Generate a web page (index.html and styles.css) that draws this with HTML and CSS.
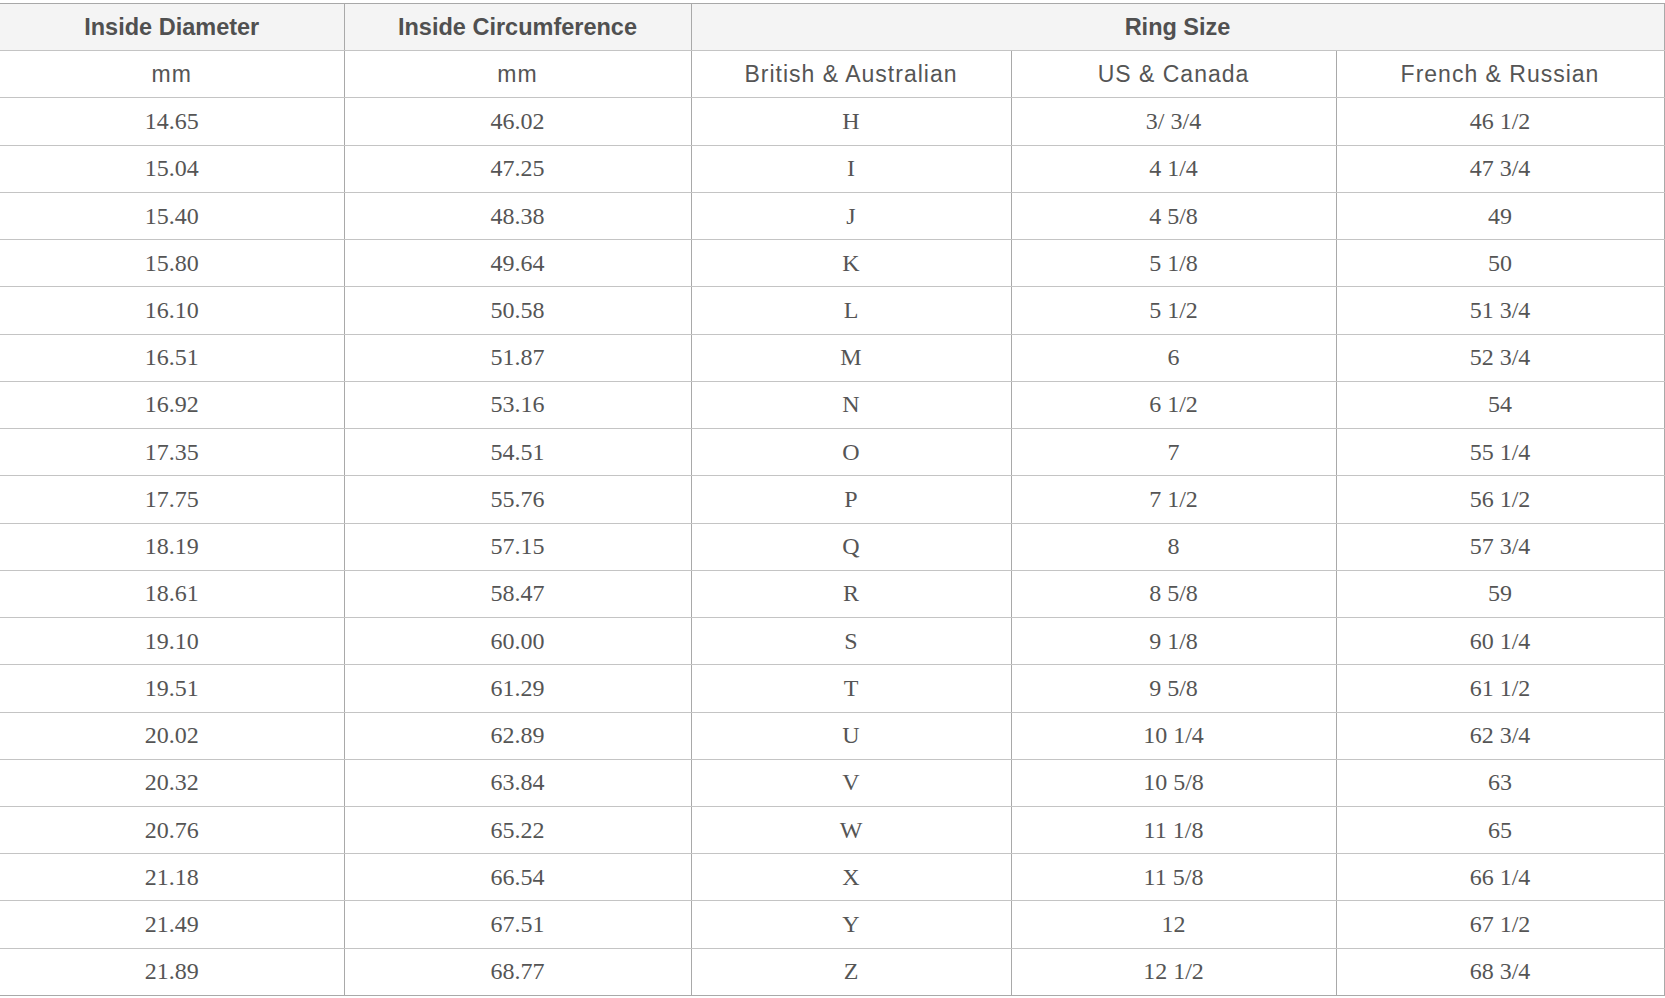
FILE: index.html
```html
<!DOCTYPE html>
<html lang="en">
<head>
<meta charset="utf-8">
<title>Ring Size Chart</title>
<link rel="stylesheet" href="styles.css">
</head>
<body>
<table class="chart">
  <colgroup>
    <col class="c1"><col class="c2"><col class="c3"><col class="c4"><col class="c5">
  </colgroup>
  <thead>
    <tr class="head">
      <th>Inside Diameter</th>
      <th>Inside Circumference</th>
      <th colspan="3">Ring Size</th>
    </tr>
    <tr class="sub">
      <td>mm</td>
      <td>mm</td>
      <td>British &amp; Australian</td>
      <td>US &amp; Canada</td>
      <td>French &amp; Russian</td>
    </tr>
  </thead>
  <tbody>
    <tr><td>14.65</td><td>46.02</td><td>H</td><td>3/ 3/4</td><td>46 1/2</td></tr>
    <tr><td>15.04</td><td>47.25</td><td>I</td><td>4 1/4</td><td>47 3/4</td></tr>
    <tr><td>15.40</td><td>48.38</td><td>J</td><td>4 5/8</td><td>49</td></tr>
    <tr><td>15.80</td><td>49.64</td><td>K</td><td>5 1/8</td><td>50</td></tr>
    <tr><td>16.10</td><td>50.58</td><td>L</td><td>5 1/2</td><td>51 3/4</td></tr>
    <tr><td>16.51</td><td>51.87</td><td>M</td><td>6</td><td>52 3/4</td></tr>
    <tr><td>16.92</td><td>53.16</td><td>N</td><td>6 1/2</td><td>54</td></tr>
    <tr><td>17.35</td><td>54.51</td><td>O</td><td>7</td><td>55 1/4</td></tr>
    <tr><td>17.75</td><td>55.76</td><td>P</td><td>7 1/2</td><td>56 1/2</td></tr>
    <tr><td>18.19</td><td>57.15</td><td>Q</td><td>8</td><td>57 3/4</td></tr>
    <tr><td>18.61</td><td>58.47</td><td>R</td><td>8 5/8</td><td>59</td></tr>
    <tr><td>19.10</td><td>60.00</td><td>S</td><td>9 1/8</td><td>60 1/4</td></tr>
    <tr><td>19.51</td><td>61.29</td><td>T</td><td>9 5/8</td><td>61 1/2</td></tr>
    <tr><td>20.02</td><td>62.89</td><td>U</td><td>10 1/4</td><td>62 3/4</td></tr>
    <tr><td>20.32</td><td>63.84</td><td>V</td><td>10 5/8</td><td>63</td></tr>
    <tr><td>20.76</td><td>65.22</td><td>W</td><td>11 1/8</td><td>65</td></tr>
    <tr><td>21.18</td><td>66.54</td><td>X</td><td>11 5/8</td><td>66 1/4</td></tr>
    <tr><td>21.49</td><td>67.51</td><td>Y</td><td>12</td><td>67 1/2</td></tr>
    <tr><td>21.89</td><td>68.77</td><td>Z</td><td>12 1/2</td><td>68 3/4</td></tr>
  </tbody>
</table>
</body>
</html>
```

FILE: styles.css
```css
html, body {
  margin: 0;
  padding: 0;
  background: #ffffff;
}

body {
  padding-top: 3px;
}

.chart {
  border-collapse: collapse;
  table-layout: fixed;
  width: 1664px;
  color: #555555;
}

.c1 { width: 344px; }
.c2 { width: 347px; }
.c3 { width: 320px; }
.c4 { width: 325px; }
.c5 { width: 328px; }

.chart tr {
  height: 47.24px;
}

.chart th,
.chart td {
  padding: 0;
  text-align: center;
  vertical-align: middle;
  border-top: 1px solid #c4c4c4;
  border-bottom: 1px solid #c4c4c4;
  border-left: 1px solid #a9a9a9;
  border-right: 1px solid #a9a9a9;
}

.chart tr > :first-child {
  border-left: none;
}

.head th {
  background: #f4f4f4;
  border-top: 1px solid #a8a8a8;
  font-family: "Liberation Sans", Arial, sans-serif;
  font-weight: bold;
  font-size: 23.5px;
  color: #505050;
}

.sub td {
  font-family: "Liberation Sans", Arial, sans-serif;
  font-size: 23px;
  letter-spacing: 1px;
  color: #555555;
}

tbody td {
  font-family: "Liberation Serif", "Times New Roman", serif;
  font-size: 24px;
  color: #555555;
  padding-top: 3px;
}

tbody tr:last-child td {
  border-bottom: 1px solid #a9a9a9;
}
```
